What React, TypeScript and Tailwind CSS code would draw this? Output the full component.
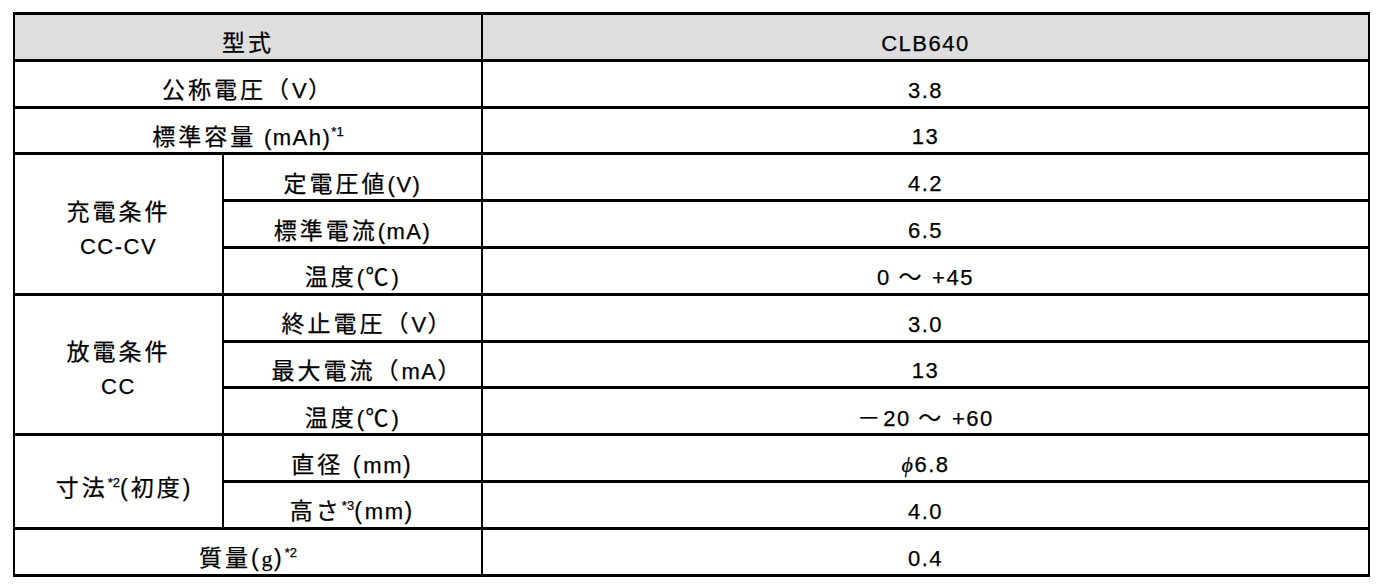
function J({ children }: { children: React.ReactNode }) {
  return <span className="text-[23px] tracking-[3px]">{children}</span>;
}

function Sup({ children }: { children: React.ReactNode }) {
  return <span className="relative -top-[9px] text-[13px] tracking-normal">{children}</span>;
}

const td = "border-x-2 border-y-[3px] border-black text-center align-middle p-0 pt-[14px]";
const tdTall = "border-x-2 border-y-[3px] border-black text-center align-middle p-0 pt-[10px] leading-[34px]";

export default function App() {
  return (
    <div
      className="min-h-screen bg-white pl-[13px] pt-[12px] text-black text-[22px] tracking-[1.5px] [-webkit-text-stroke:0.25px_black]"
      style={{ fontFamily: '"Liberation Sans", "Noto Sans CJK JP", sans-serif' }}
    >
      <table className="w-[1357px] table-fixed border-collapse leading-none">
        <colgroup>
          <col className="w-[209px]" />
          <col className="w-[259px]" />
          <col />
        </colgroup>
        <tbody>
          <tr className="h-[46.8px] bg-[#dedede]">
            <td colSpan={2} className={td}>
              <J>型式</J>
            </td>
            <td className={td}>CLB640</td>
          </tr>
          <tr className="h-[46.8px]">
            <td colSpan={2} className={td}>
              <J>公称電圧（</J>V<J>）</J>
            </td>
            <td className={td}>3.8</td>
          </tr>
          <tr className="h-[46.8px]">
            <td colSpan={2} className={td}>
              <J>標準容量</J> (mAh)<Sup>*1</Sup>
            </td>
            <td className={td}>13</td>
          </tr>

          <tr className="h-[46.8px]">
            <td rowSpan={3} className={tdTall}>
              <div><J>充電条件</J></div>
              <div>CC-CV</div>
            </td>
            <td className={td}>
              <J>定電圧値</J>(V)
            </td>
            <td className={td}>4.2</td>
          </tr>
          <tr className="h-[46.8px]">
            <td className={td}>
              <J>標準電流</J>(mA)
            </td>
            <td className={td}>6.5</td>
          </tr>
          <tr className="h-[46.8px]">
            <td className={td}>
              <J>温度</J>(<J>℃</J>)
            </td>
            <td className={td}>
              0 <J>～</J> +45
            </td>
          </tr>

          <tr className="h-[46.8px]">
            <td rowSpan={3} className={tdTall}>
              <div><J>放電条件</J></div>
              <div>CC</div>
            </td>
            <td className={`${td} pl-[30px]`}>
              <J>終止電圧（</J>V<J>）</J>
            </td>
            <td className={td}>3.0</td>
          </tr>
          <tr className="h-[46.8px]">
            <td className={`${td} pl-[30px]`}>
              <J>最大電流（</J>mA<J>）</J>
            </td>
            <td className={td}>13</td>
          </tr>
          <tr className="h-[46.8px]">
            <td className={td}>
              <J>温度</J>(<J>℃</J>)
            </td>
            <td className={td}>
              <J>－</J>20 <J>～</J> +60
            </td>
          </tr>

          <tr className="h-[46.8px]">
            <td rowSpan={2} className={`${td} pl-[12px]`}>
              <J>寸法</J>
              <Sup>*2</Sup>
              <J>(初度)</J>
            </td>
            <td className={td}>
              <J>直径 (</J>mm<J>)</J>
            </td>
            <td className={td}>
              <span className="italic" style={{ fontFamily: '"Liberation Serif", serif' }}>ϕ</span>6.8
            </td>
          </tr>
          <tr className="h-[46.8px]">
            <td className={td}>
              <J>高さ</J>
              <Sup>*3</Sup>
              <J>(</J>mm<J>)</J>
            </td>
            <td className={td}>4.0</td>
          </tr>

          <tr className="h-[46.8px]">
            <td colSpan={2} className={td}>
              <J>質量(</J>
              <span style={{ fontFamily: '"Liberation Serif", serif' }}>g</span>
              <J>)</J>
              <Sup>*2</Sup>
            </td>
            <td className={td}>0.4</td>
          </tr>
        </tbody>
      </table>
    </div>
  );
}
